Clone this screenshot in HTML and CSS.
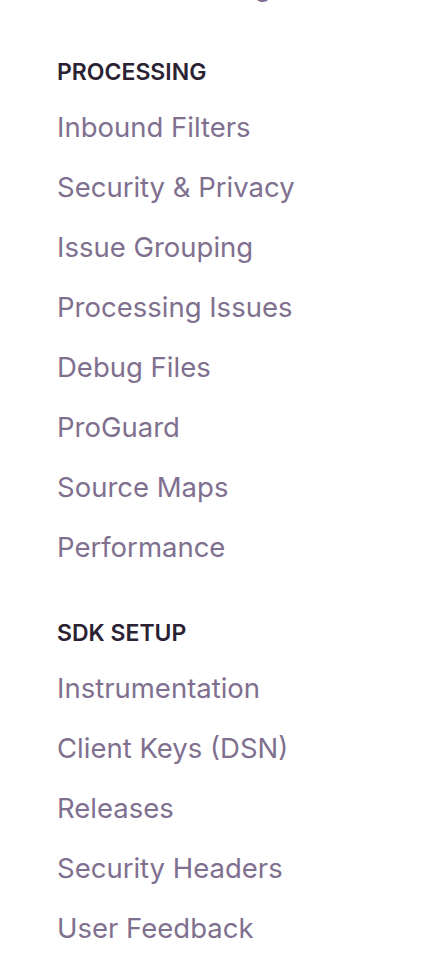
FILE: index.html
```html
<!DOCTYPE html>
<html>
<head>
<meta charset="utf-8">
<link rel="stylesheet" href="styles.css">
</head>
<body>
<div class="menu">
  <section class="group">
    <nav class="links">
      <a class="link" href="#">Data Forwarding</a>
    </nav>
  </section>
  <section class="group">
    <h2 class="heading">PROCESSING</h2>
    <nav class="links">
      <a class="link" href="#">Inbound Filters</a>
      <a class="link" href="#">Security &amp; Privacy</a>
      <a class="link" href="#">Issue Grouping</a>
      <a class="link" href="#">Processing Issues</a>
      <a class="link" href="#">Debug Files</a>
      <a class="link" href="#">ProGuard</a>
      <a class="link" href="#">Source Maps</a>
      <a class="link" href="#">Performance</a>
    </nav>
  </section>
  <section class="group">
    <h2 class="heading">SDK SETUP</h2>
    <nav class="links">
      <a class="link" href="#">Instrumentation</a>
      <a class="link" href="#">Client Keys (DSN)</a>
      <a class="link" href="#">Releases</a>
      <a class="link" href="#">Security Headers</a>
      <a class="link" href="#">User Feedback</a>
    </nav>
  </section>
</div>
</body>
</html>
```
FILE: styles.css
```css
html, body {
  margin: 0;
  padding: 0;
  background: #ffffff;
}
body {
  font-family: Inter, "Open Sans", sans-serif;
  overflow: hidden;
}
.menu {
  display: flex;
  flex-direction: column;
  gap: 44px;
  padding-left: 57px;
  margin-top: -44px;
}
.group {
  display: flex;
  flex-direction: column;
}
.heading {
  margin: 0 0 13px 0;
  font-size: 23px;
  line-height: 24px;
  font-weight: 600;
  color: #2b2233;
  letter-spacing: 0;
}
.links {
  display: flex;
  flex-direction: column;
}
.link {
  display: block;
  font-size: 27.5px;
  line-height: 60px;
  color: #80708f;
  text-decoration: none;
}
```
